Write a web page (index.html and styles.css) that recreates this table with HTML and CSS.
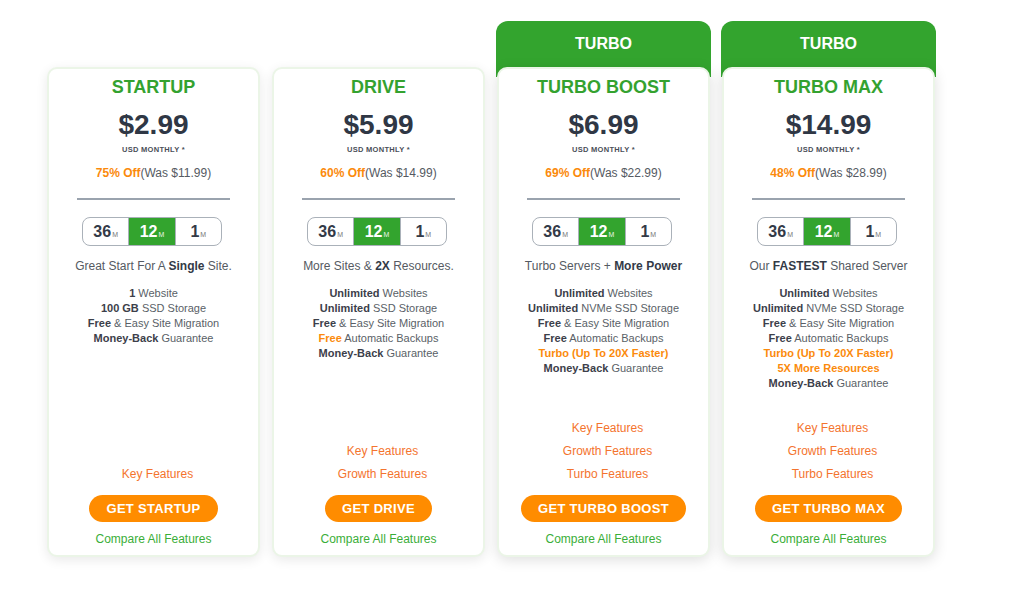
FILE: index.html
```html
<!DOCTYPE html>
<html lang="en">
<head>
<meta charset="utf-8">
<title>Hosting Plans</title>
<link rel="stylesheet" href="styles.css">
</head>
<body>
<main class="plans">
  <section class="col">
    <div class="card">
      <h2 class="name">STARTUP</h2>
      <div class="price">$2.99</div>
      <div class="per">USD MONTHLY *</div>
      <div class="off"><b>75% Off</b>(Was $11.99)</div>
      <hr class="rule">
      <div class="terms"><span class="t">36<small>M</small></span><span class="t on">12<small>M</small></span><span class="t">1<small>M</small></span></div>
      <p class="tag">Great Start For A <b>Single</b> Site.</p>
      <ul class="feats">
        <li><b>1</b> Website</li>
        <li><b>100 GB</b> SSD Storage</li>
        <li><b>Free</b> &amp; Easy Site Migration</li>
        <li><b>Money-Back</b> Guarantee</li>
      </ul>
      <div class="links"><a>Key Features</a></div>
      <a class="btn">GET STARTUP</a>
      <a class="compare">Compare All Features</a>
    </div>
  </section>
  <section class="col">
    <div class="card">
      <h2 class="name">DRIVE</h2>
      <div class="price">$5.99</div>
      <div class="per">USD MONTHLY *</div>
      <div class="off"><b>60% Off</b>(Was $14.99)</div>
      <hr class="rule">
      <div class="terms"><span class="t">36<small>M</small></span><span class="t on">12<small>M</small></span><span class="t">1<small>M</small></span></div>
      <p class="tag">More Sites &amp; <b>2X</b> Resources.</p>
      <ul class="feats">
        <li><b>Unlimited</b> Websites</li>
        <li><b>Unlimited</b> SSD Storage</li>
        <li><b>Free</b> &amp; Easy Site Migration</li>
        <li><b class="hl">Free</b> Automatic Backups</li>
        <li><b>Money-Back</b> Guarantee</li>
      </ul>
      <div class="links"><a>Key Features</a><a>Growth Features</a></div>
      <a class="btn">GET DRIVE</a>
      <a class="compare">Compare All Features</a>
    </div>
  </section>
  <section class="col turbo">
    <div class="badge">TURBO</div>
    <div class="card">
      <h2 class="name">TURBO BOOST</h2>
      <div class="price">$6.99</div>
      <div class="per">USD MONTHLY *</div>
      <div class="off"><b>69% Off</b>(Was $22.99)</div>
      <hr class="rule">
      <div class="terms"><span class="t">36<small>M</small></span><span class="t on">12<small>M</small></span><span class="t">1<small>M</small></span></div>
      <p class="tag">Turbo Servers + <b>More Power</b></p>
      <ul class="feats">
        <li><b>Unlimited</b> Websites</li>
        <li><b>Unlimited</b> NVMe SSD Storage</li>
        <li><b>Free</b> &amp; Easy Site Migration</li>
        <li><b>Free</b> Automatic Backups</li>
        <li><b class="hl">Turbo (Up To 20X Faster)</b></li>
        <li><b>Money-Back</b> Guarantee</li>
      </ul>
      <div class="links"><a>Key Features</a><a>Growth Features</a><a>Turbo Features</a></div>
      <a class="btn">GET TURBO BOOST</a>
      <a class="compare">Compare All Features</a>
    </div>
  </section>
  <section class="col turbo">
    <div class="badge">TURBO</div>
    <div class="card">
      <h2 class="name">TURBO MAX</h2>
      <div class="price">$14.99</div>
      <div class="per">USD MONTHLY *</div>
      <div class="off"><b>48% Off</b>(Was $28.99)</div>
      <hr class="rule">
      <div class="terms"><span class="t">36<small>M</small></span><span class="t on">12<small>M</small></span><span class="t">1<small>M</small></span></div>
      <p class="tag">Our <b>FASTEST</b> Shared Server</p>
      <ul class="feats">
        <li><b>Unlimited</b> Websites</li>
        <li><b>Unlimited</b> NVMe SSD Storage</li>
        <li><b>Free</b> &amp; Easy Site Migration</li>
        <li><b>Free</b> Automatic Backups</li>
        <li><b class="hl">Turbo (Up To 20X Faster)</b></li>
        <li><b class="hl">5X More Resources</b></li>
        <li><b>Money-Back</b> Guarantee</li>
      </ul>
      <div class="links"><a>Key Features</a><a>Growth Features</a><a>Turbo Features</a></div>
      <a class="btn">GET TURBO MAX</a>
      <a class="compare">Compare All Features</a>
    </div>
  </section>
</main>
</body>
</html>
```
FILE: styles.css
```css
* { box-sizing: border-box; }
html, body { margin: 0; padding: 0; background: #fff; }
body {
  font-family: "Liberation Sans", Arial, sans-serif;
  color: #555a62;
}
.plans {
  display: flex;
  gap: 12px;
  padding: 21px 0 24px 47px;
  align-items: flex-start;
}
.col {
  width: 213px;
  display: flex;
  flex-direction: column;
  padding-top: 46px;
}
.col.turbo { padding-top: 0; }
.badge {
  height: 56px;
  margin: 0 -1px -10px;
  background: #33a42e;
  color: #fff;
  font-weight: bold;
  font-size: 16px;
  text-align: center;
  line-height: 45px;
  border-radius: 12px 12px 0 0;
}
.card {
  position: relative;
  height: 490px;
  background: #fff;
  border: 2px solid #ebf5e7;
  border-radius: 10px;
  box-shadow: 0 3px 12px rgba(0, 0, 0, 0.09);
  display: flex;
  flex-direction: column;
  align-items: center;
  padding: 7px 0 8px;
  text-align: center;
}
.turbo .card { box-shadow: 0 3px 14px rgba(0, 0, 0, 0.13); }
.name {
  margin: 0;
  font-size: 18px;
  line-height: 22px;
  color: #34a22f;
  font-weight: bold;
}
.price {
  margin-top: 10px;
  font-size: 28px;
  line-height: 34px;
  font-weight: bold;
  color: #2f3745;
}
.per {
  margin-top: 3px;
  font-size: 7.5px;
  letter-spacing: 0.3px;
  line-height: 10px;
  font-weight: bold;
  color: #4a4f58;
}
.off {
  margin-top: 10px;
  font-size: 12px;
  line-height: 16px;
  color: #555a62;
}
.off b { color: #fb8a0c; }
.rule {
  margin: 17px 0 0;
  width: 153px;
  height: 2px;
  border: 0;
  background: #9aa3ae;
}
.terms {
  margin: 17px 3px 0 0;
  width: 140px;
  height: 29px;
  display: flex;
  border: 1px solid #aab1b9;
  border-radius: 8px;
  overflow: hidden;
}
.t {
  flex: 1;
  display: flex;
  align-items: center;
  justify-content: center;
  font-size: 16px;
  font-weight: bold;
  color: #333a47;
}
.t small {
  font-size: 7px;
  font-weight: normal;
  color: #777;
  margin-top: 6px;
  margin-left: 1px;
}
.t.on { background: #33a42e; color: #fff; border-left: 1px solid #aab1b9; border-right: 1px solid #aab1b9; }
.t.on small { color: #e8f5e6; }
.tag {
  margin: 12px 0 0;
  font-size: 12px;
  line-height: 16px;
  color: #555a62;
}
.tag b { color: #333a47; }
.feats {
  list-style: none;
  margin: 12px 0 0;
  padding: 0;
  font-size: 11px;
  line-height: 15px;
  color: #5a5f67;
}
.feats b { color: #3c404a; }
.feats b.hl { color: #fb8a0c; }
.links {
  margin-top: auto;
  padding-left: 8px;
  display: flex;
  flex-direction: column;
  font-size: 12px;
  line-height: 23px;
  color: #f4742e;
}
.btn {
  margin-top: 9px;
  height: 27px;
  line-height: 27px;
  padding: 0 17px;
  border-radius: 14px;
  background: #ff8c00;
  color: #fff;
  font-weight: bold;
  font-size: 13px;
  letter-spacing: 0.3px;
}
.compare {
  margin-top: 9px;
  font-size: 12px;
  line-height: 16px;
  color: #3aae38;
}
```
